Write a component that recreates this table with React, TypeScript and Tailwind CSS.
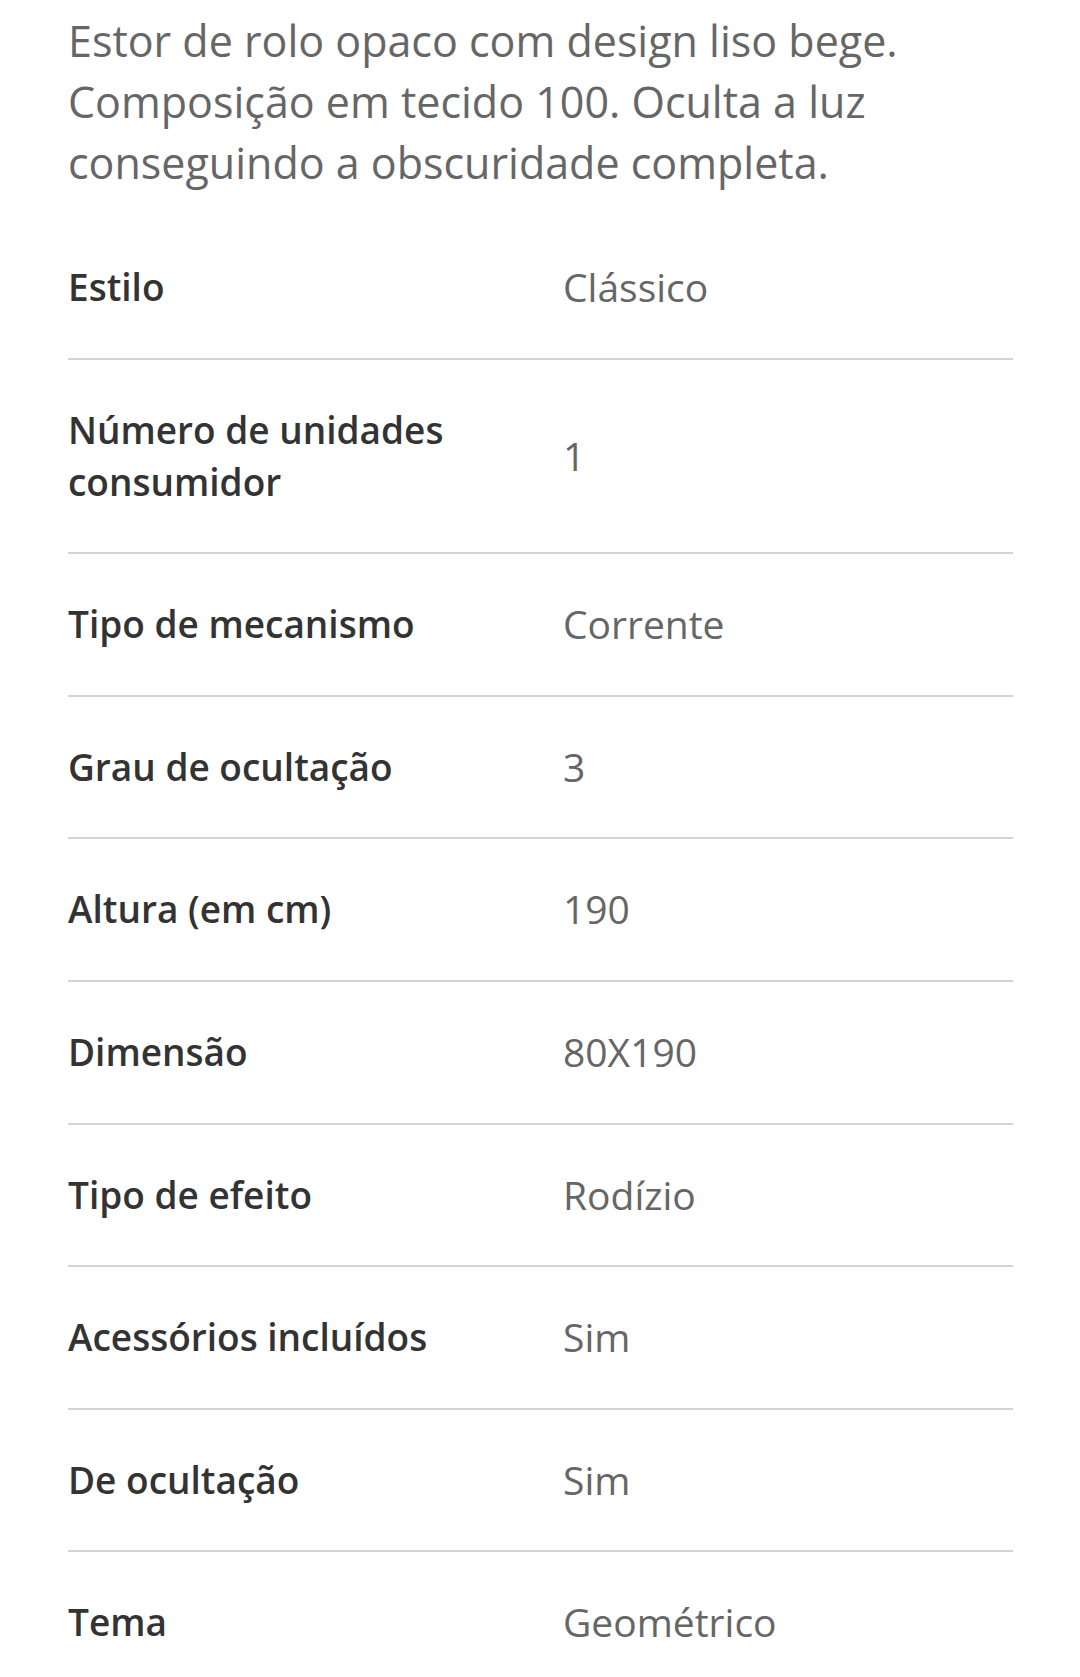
const rows: { label: string; value: string }[] = [
  { label: "Estilo", value: "Clássico" },
  { label: "Número de unidades consumidor", value: "1" },
  { label: "Tipo de mecanismo", value: "Corrente" },
  { label: "Grau de ocultação", value: "3" },
  { label: "Altura (em cm)", value: "190" },
  { label: "Dimensão", value: "80X190" },
  { label: "Tipo de efeito", value: "Rodízio" },
  { label: "Acessórios incluídos", value: "Sim" },
  { label: "De ocultação", value: "Sim" },
  { label: "Tema", value: "Geométrico" },
];

export default function App() {
  return (
    <div className="min-h-[1677px] w-[1080px] bg-white px-[68px] pt-[10px] font-['Open_Sans',sans-serif]">
      {/* Description */}
      <p className="text-[43px] leading-[61px] text-[#666666] w-[945px]">
        Estor de rolo opaco com design liso bege. Composição em tecido 100. Oculta a luz conseguindo a obscuridade completa.
      </p>

      {/* Specs table */}
      <div className="mt-[24px] flex flex-col w-[945px]">
        {rows.map((r, i) => (
          <div
            key={r.label}
            className={`grid grid-cols-[495px_1fr] items-center pt-[44px] pb-[44.6px] ${i < rows.length - 1 ? "border-b-2 border-[#d4d4d4]" : ""}`}
          >
            <span className="w-[420px] text-[37px] leading-[52px] font-semibold text-[#333333]">{r.label}</span>
            <span className="text-[39px] leading-[52px] text-[#666666]">{r.value}</span>
          </div>
        ))}
      </div>
    </div>
  );
}
